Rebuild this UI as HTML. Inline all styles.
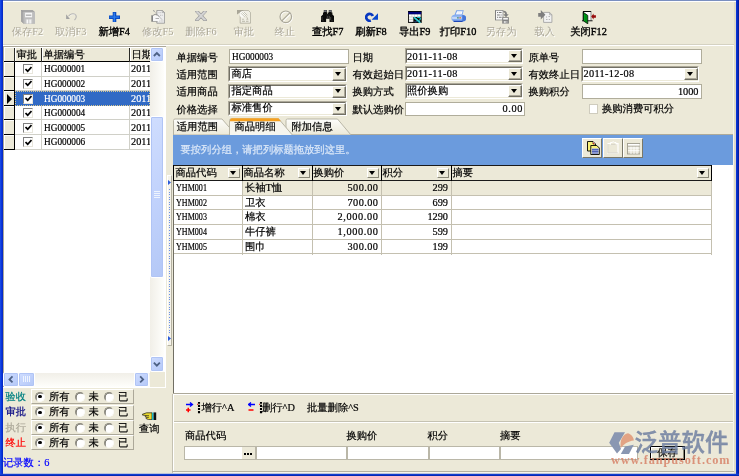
<!DOCTYPE html><html><head><meta charset="utf-8"><title>form</title><style>
*{box-sizing:border-box;margin:0;padding:0}
html,body{width:739px;height:476px;overflow:hidden;background:#ECE9D8}
body{position:relative;font-family:"Liberation Serif","WenQuanYi Zen Hei",serif;font-size:10.3px;line-height:12px;color:#000}
.a{position:absolute;white-space:nowrap}
.t{position:absolute;white-space:nowrap;height:12px;line-height:12px;-webkit-text-stroke:.2px currentColor}
.t.dis{color:#ACA899;text-shadow:1px 1px 0 #fff;-webkit-text-stroke:0}
.hy{padding:0 .85px}
.pd{padding:0 1.250px}
.sx{display:inline-block;transform-origin:0 50%}
.t.b{-webkit-text-stroke:.35px #000}
.flat{position:absolute;background:#fff;border:1px solid #B0AD9B}
.sunk{position:absolute;background:#fff;border-top:1px solid #ACA899;border-left:1px solid #ACA899;border-right:1px solid #fff;border-bottom:1px solid #fff}
.sunk:before{content:"";position:absolute;left:0;top:0;right:0;bottom:0;border-top:1px solid #716F64;border-left:1px solid #716F64;border-right:1px solid #ECE9D8;border-bottom:1px solid #ECE9D8}
.cbtn{position:absolute;background:#ECE9D8;border-top:1px solid #fff;border-left:1px solid #fff;border-right:1px solid #716F64;border-bottom:1px solid #716F64;box-shadow:inset -1px -1px 0 #ACA899}
.arr{position:absolute;width:0;height:0;border-left:4px solid transparent;border-right:4px solid transparent;border-top:4px solid #000}
.sarr{position:absolute;width:0;height:0;border-left:3.5px solid transparent;border-right:3.5px solid transparent;border-top:4px solid #000}
.hl{position:absolute;height:1px}
.vl{position:absolute;width:1px}
.rg{position:absolute;border-top:1px solid #fff;border-left:1px solid #fff;border-right:1px solid #ACA899;border-bottom:1px solid #ACA899;background:#ECE9D8}
.rad{position:absolute;width:10px;height:10px;border-radius:50%;background:#fff;border:1px solid;border-color:#8A887C #FBFBF8 #FBFBF8 #8A887C;box-shadow:inset .6px .6px 0 #5A584E}
.rad.on:after{content:"";position:absolute;left:2.300px;top:2.300px;width:3.400px;height:3.400px;border-radius:50%;background:#000}
.sb{position:absolute;background:linear-gradient(135deg,#CFDDFE 0%,#C1D2FC 50%,#B4C8F6 100%);border:1px solid #fff;border-radius:2px;box-shadow:inset 0 0 0 1px #B0C4F5}
</style></head><body><div id="w" style="position:absolute;left:0;top:0;width:739px;height:476px;will-change:transform">
<div class="a" style="left:0px;top:0px;width:739px;height:1px;background:#7A8FC0;"></div>
<div class="a" style="left:0px;top:1px;width:739px;height:1px;background:#FFFFFF;"></div>
<div class="a" style="left:0px;top:0px;width:3px;height:476px;background:linear-gradient(90deg,#1A50E8,#0831D9 60%,#0628B8);"></div>
<div class="a" style="left:736px;top:0px;width:3px;height:476px;background:linear-gradient(90deg,#0A3AE0,#0628C0 50%,#001A90);"></div>
<div class="a" style="left:734px;top:2px;width:2px;height:472px;background:#DEDAC9;"></div>
<div class="a" style="left:733px;top:46px;width:1px;height:427px;background:#F6F5EC;"></div>
<div class="a" style="left:0px;top:474px;width:739px;height:2px;background:linear-gradient(180deg,#1848DC,#0020A8);"></div>
<div class="a" style="left:0px;top:473px;width:739px;height:1px;background:rgba(40,80,220,.25);"></div>
<div class="a" style="left:3px;top:44px;width:731px;height:1px;background:#D5D2C2;"></div>
<div class="a" style="left:3px;top:45px;width:731px;height:1px;background:#FFFFFF;"></div>
<svg class="a" style="left:20.9px;top:10px;" width="14" height="13.5" viewBox="0 0 14 13.500" preserveAspectRatio="none"><path d="M0 0H11.600L14 2V13.500H2.600L0 11z" fill="#A6A6A6"/><path d="M2.200 2H14V13.500H2.600z" fill="#BDBDBD"/><path d="M0 0L2.200 2M0 11L2.600 13.500" stroke="#989898" stroke-width=".6"/><rect x="4.100" y="2.700" width="7" height="4.600" fill="#F6F6F6"/><rect x="4.900" y="4.600" width="5.400" height="1.100" fill="#A0A0A0"/><rect x="4.600" y="9" width="6.600" height="4.500" fill="#CFCFCF"/><rect x="5.600" y="9.600" width="1.500" height="3.900" fill="#F8F8F8"/><rect x="8.300" y="9.600" width="1.900" height="3.900" fill="#F0F0F0"/></svg>
<div class="t dis" style="left:-32.5px;width:120px;text-align:center;top:26px;">保存F2</div>
<svg class="a" style="left:66px;top:12.5px;" width="11.5" height="8" viewBox="0 0 11.500 8" preserveAspectRatio="none"><path d="M0.100 1.300V6.100H3.900z" fill="#A2A2A2"/><path d="M2.500 3.200C4 1 7 0.300 8.800 1.300 10.800 2.500 10.800 5 8.500 7" fill="none" stroke="#B4B4B4" stroke-width="1.100"/><path d="M3 3.900C4.500 1.700 7.500 1 9.300 2" fill="none" stroke="#fff" stroke-width=".6" opacity=".7"/></svg>
<div class="t dis" style="left:10.75px;width:120px;text-align:center;top:26px;">取消F3</div>
<svg class="a" style="left:109.4px;top:11.6px;" width="11" height="10.6" viewBox="0 0 11 10.600" preserveAspectRatio="none"><path d="M3.700 0h3.600v3.500h3.700v3.600H7.300v3.500H3.700V7.100H0V3.500h3.700z" fill="#0A4CC4"/><path d="M4.600 0.800h1.400v3.600h4v1.300H6v4H4.600v-4h-4V4.400h4z" fill="#2C7CEC"/></svg>
<div class="t b" style="left:54.25px;width:120px;text-align:center;top:26px;">新增F4</div>
<svg class="a" style="left:151px;top:10px;" width="14" height="13.6" viewBox="0 0 14 13.600" preserveAspectRatio="none"><path d="M5.800 0.400H11.300L13.600 2.600V13.200H5.800z" fill="#EDEDED" stroke="#8E8E8E" stroke-width=".8"/><path d="M11.300 0.400V2.600H13.600" fill="none" stroke="#8E8E8E" stroke-width=".6"/><path d="M7.500 2.700h3M9 5.300h3M8 11h4.500" stroke="#A8A8A8" stroke-width=".7" stroke-dasharray="1 .7"/><path d="M1 5.600H6.500L8.500 7.500V11.200H1z" fill="#F8F8F8"/><path d="M0.300 5.300H2V11.800H0.300z" fill="#848484"/><path d="M2 5.500Q4 3.600 6 4.500L8.300 6.800" fill="none" stroke="#8E8E8E" stroke-width=".9"/><path d="M2 11.500H6.500" stroke="#9A9A9A" stroke-width=".8"/><path d="M2.600 0.600L11 9.600" stroke="#B0B0B0" stroke-width="1" stroke-dasharray="2 .6"/><path d="M4.500 8.500H8" stroke="#9A9A9A" stroke-width=".8"/><path d="M2.200 0.300l1.200 0.300-0.600 0.800z" fill="#7A7A7A"/></svg>
<div class="t dis" style="left:97.75px;width:120px;text-align:center;top:26px;">修改F5</div>
<svg class="a" style="left:195px;top:11.3px;" width="12" height="9.6" viewBox="0 0 12 9.600" preserveAspectRatio="none"><path d="M0 0H3.100L12 9.600H8.900zM8.900 0H12L3.100 9.600H0z" fill="#D2D2D2" stroke="#A2A2A2" stroke-width="1.100" stroke-linejoin="round"/><path d="M0.500 0.400H2.900L11.500 9.200H9.100zM9.100 0.400H11.500L2.900 9.200H0.500z" fill="#D4D4D4"/></svg>
<div class="t dis" style="left:141px;width:120px;text-align:center;top:26px;">删除F6</div>
<svg class="a" style="left:237px;top:10px;" width="14" height="13.6" viewBox="0 0 14 13.600" preserveAspectRatio="none"><path d="M3.200 0.400H11.400L13.600 2.600V13.200H3.200z" fill="#F0EEE4" stroke="#ABA899" stroke-width=".8"/><path d="M0 0H7L0 4.600z" fill="#A9A698"/><circle cx="5.600" cy="4.300" r="3.100" fill="#FAFAF6"/><path d="M4 3.200L8 7.200M5.300 2.300L9.300 6.300M6.800 1.800L10.300 5.300" stroke="#B5B2A2" stroke-width=".7"/><path d="M9.500 6.500l1.500 3" stroke="#B5B2A2" stroke-width=".7"/><path d="M5.200 9.300h1.600M9.500 9.300h1.200M5 11.300h3M9 11.300h2.500" stroke="#ABA899" stroke-width=".8"/></svg>
<div class="t dis" style="left:183.75px;width:120px;text-align:center;top:26px;">审批</div>
<svg class="a" style="left:278.6px;top:9.6px;" width="14" height="14" viewBox="0 0 14 14" preserveAspectRatio="none"><circle cx="7.400" cy="7.500" r="5.800" fill="none" stroke="#fff" stroke-width="1.200"/><path d="M3.600 11.800L11.800 3.600" stroke="#fff" stroke-width="1.200"/><circle cx="6.800" cy="6.800" r="5.800" fill="none" stroke="#ABA899" stroke-width="1.200"/><path d="M2.800 10.800L10.800 2.800" stroke="#ABA899" stroke-width="1.200"/></svg>
<div class="t dis" style="left:224.75px;width:120px;text-align:center;top:26px;">终止</div>
<svg class="a" style="left:321px;top:10px;" width="13.4" height="12" viewBox="0 0 13.400 12" preserveAspectRatio="none"><path d="M2.800 0H5.800V2.500H6.400V6H5.100V12H0V6.500L2 4.500V2.500H2.800z" fill="#0A0A0A"/><path d="M10.600 0H7.800V2.500H7V6H8.500V12H13.400V6.500L11.400 4.500V2.500H10.600z" fill="#0A0A0A"/><rect x="5" y="4" width="3.600" height="4.800" fill="#151515"/><rect x="3.100" y="0.300" width="2.400" height="1.700" fill="#70747C"/><rect x="8.100" y="0.300" width="2.400" height="1.700" fill="#70747C"/><path d="M1 7v3M6.700 6v2.500M9.700 7v3" stroke="#505050" stroke-width=".8"/><path d="M1 10.800h2M10 10.800h2" stroke="#404040" stroke-width=".6"/></svg>
<div class="t b" style="left:267.75px;width:120px;text-align:center;top:26px;">查找F7</div>
<svg class="a" style="left:365px;top:11.5px;" width="13.5" height="11" viewBox="0 0 13.500 11" preserveAspectRatio="none"><path d="M7.800 4.100 A3.400 3.400 0 1 0 5.800 8.500" fill="none" stroke="#0838C0" stroke-width="2.700"/><path d="M13 1.300V7.700H6.600z" fill="#0A48D0"/></svg>
<div class="t b" style="left:311px;width:120px;text-align:center;top:26px;">刷新F8</div>
<svg class="a" style="left:408.2px;top:10.6px;" width="13.6" height="12.2" viewBox="0 0 13.600 12.200" preserveAspectRatio="none"><rect x="0.400" y="0.400" width="12.800" height="11" fill="#C8C8C8" stroke="#000" stroke-width=".9"/><rect x="0.400" y="0.300" width="12.800" height="3" fill="#00007C"/><rect x="0.400" y="0" width="12.800" height="0.800" fill="#000"/><path d="M1 4.600h2.600M4.200 4.600h2.200M7 4.600h2.200M9.800 4.600h2.600" stroke="#fff" stroke-width="1.700"/><rect x="1" y="6.400" width="3.800" height="4.300" fill="#F4F4F4"/><path d="M1 8.500h3.800" stroke="#B0B0B0" stroke-width=".6"/><path d="M5.400 6H13.200V12H4.200L4 11H5.400z" fill="#0C0C0C"/><path d="M6 6.300L12.300 11.800" stroke="#18C4CC" stroke-width="1.700"/><path d="M6.300 6.100L12.600 11.600" stroke="#90F0F0" stroke-width=".5"/><path d="M9.200 6.600Q12 5.800 12.400 7.400 12.600 8.800 11.200 9.400" fill="none" stroke="#18C4CC" stroke-width="1.100"/><path d="M6.500 10.600Q7.500 11.200 8.800 10.600" fill="none" stroke="#3858A8" stroke-width=".9"/></svg>
<div class="t b" style="left:354.75px;width:120px;text-align:center;top:26px;">导出F9</div>
<svg class="a" style="left:451px;top:10.3px;" width="15.5" height="12.2" viewBox="0 0 15.500 12.200" preserveAspectRatio="none"><path d="M5.300 0.300H12.800L11.400 5H3.500z" fill="#78A2EC"/><path d="M6.100 1.200H11.600L10.600 4.600H4.800z" fill="#FBFCFF"/><path d="M6.500 3h3.500" stroke="#D8E0F0" stroke-width=".7"/><path d="M0.500 7.200C0.500 5.600 2 4.700 3.500 4.700H11.500C13.500 4.700 15 6 15 7.500V9C15 10.500 13.500 11.500 12 11.500H3.500C2 11.500 0.500 10.500 0.500 9z" fill="#86AEF0"/><path d="M11.300 4.900C13.500 4.900 15 6 15 7.500V9C15 10.200 14 11 13 11.300L11.300 11.300z" fill="#4676D8"/><rect x="0.900" y="6.700" width="10" height="2.200" rx=".8" fill="#C2D6F8"/><path d="M2 10.700H12.200L11.200 12.100H3z" fill="#1C46B6"/><rect x="6.300" y="7" width="1.100" height="1.600" fill="#30985A"/><rect x="7.600" y="7" width="0.800" height="1.600" fill="#7060B0"/><rect x="8.700" y="7" width="1.200" height="1.600" fill="#F08030"/></svg>
<div class="t b" style="left:398px;width:120px;text-align:center;top:26px;">打印F10</div>
<svg class="a" style="left:495px;top:10px;" width="14" height="13.6" viewBox="0 0 14 13.600" preserveAspectRatio="none"><rect x="0.400" y="0.400" width="7.600" height="9.600" fill="#F8F8F8" stroke="#8C8C8C" stroke-width=".8"/><path d="M0.400 0.400V10" stroke="#7A7A7A" stroke-width="1"/><path d="M2 2.500h1.200M4 2.500h2.600M2 5h2.800M5.600 5h1M2 7.300h1.200M4 7.300h2.600" stroke="#7C7C7C" stroke-width="1"/><path d="M8.300 0.800Q12 0.600 12 4.300H13.700L11 7.300 8.300 4.300H10.200Q10.200 2.400 8.300 2.300z" fill="#808080"/><rect x="7.200" y="7.200" width="6.700" height="6.400" fill="#848484"/><rect x="8.200" y="8" width="4.700" height="1.600" fill="#F4F4F4"/><rect x="8.800" y="11" width="3.500" height="2.200" fill="#DADADA"/><rect x="10.700" y="11.300" width="1" height="1.600" fill="#848484"/></svg>
<div class="t dis" style="left:441px;width:120px;text-align:center;top:26px;">另存为</div>
<svg class="a" style="left:538.3px;top:10px;" width="14.3" height="12.8" viewBox="0 0 14.300 12.800" preserveAspectRatio="none"><path d="M5.600 2.400H11.600L13.900 4.800V12.400H5.600z" fill="#F1F1F1" stroke="#9C9C9C" stroke-width=".8"/><path d="M11.600 2.400V4.800H13.900" fill="none" stroke="#9C9C9C" stroke-width=".7"/><path d="M8 7h1M10.500 6.500h1.500M8 9.500h1.500M10.800 9.500h1.200" stroke="#AEAEAE" stroke-width=".9"/><path d="M0.200 3H2.800V0L7.400 4.800 2.800 9.600V6.800H0.200z" fill="#7E7E7E"/></svg>
<div class="t dis" style="left:484.5px;width:120px;text-align:center;top:26px;">载入</div>
<svg class="a" style="left:582px;top:10.6px;" width="14" height="13.2" viewBox="0 0 14 13.200" preserveAspectRatio="none"><rect x="1.200" y="0.500" width="7.800" height="9.300" fill="#fff"/><path d="M1 0.500H9.200M1.300 0.500V9.800" stroke="#000" stroke-width="1"/><path d="M9 0.800V9.800" stroke="#7A7A7A" stroke-width=".9"/><path d="M0 9.800H10.600" stroke="#000" stroke-width=".9"/><path d="M1.300 1.300L5.800 4.400V12.900L1.300 9.800z" fill="#008C14" stroke="#000" stroke-width=".7"/><path d="M2.500 3.500V10" stroke="#00A820" stroke-width=".8"/><path d="M9.200 5.500L11.600 2.500V4.300H13.900V6.800H11.600V8.600z" fill="#960A0A"/></svg>
<div class="t b" style="left:528.5px;width:120px;text-align:center;top:26px;">关闭F12</div>
<div class="a" style="left:3px;top:46px;width:163px;height:342px;background:#fff;"></div>
<div class="a" style="left:3px;top:46px;width:163px;height:1px;background:#ACA899;"></div>
<div class="a" style="left:3px;top:46px;width:1px;height:341px;background:#ACA899;"></div>
<div class="a" style="left:4px;top:47px;width:146px;height:15px;background:#ECE9D8;"></div>
<div class="a" style="left:4px;top:62px;width:10px;height:88px;background:#ECE9D8;"></div>
<div class="a" style="left:15px;top:75.6px;width:135px;height:1px;background:#D0D0C8;"></div>
<div class="a" style="left:23px;top:64.3px;width:10px;height:10px;background:#fff;border-top:1px solid #808080;border-left:1px solid #808080;border-right:1px solid #E8E6DC;border-bottom:1px solid #E8E6DC;"></div>
<svg class="a" style="left:25px;top:65.8px" width="7" height="7" viewBox="0 0 7 7"><path d="M0.500 3L2.700 5.200 6.500 1" fill="none" stroke="#000" stroke-width="1.7"/></svg>
<div class="t " style="left:43.5px;top:63.3px;"><span class="sx" style="transform:scaleX(0.900)">HG000001</span></div>
<div class="t " style="left:131px;top:63.3px;width:19px;overflow:hidden">2011</div>
<div class="a" style="left:4px;top:75.6px;width:10px;height:1px;background:#000;"></div>
<div class="a" style="left:4px;top:62px;width:10px;height:1px;background:#fff;"></div>
<div class="a" style="left:4px;top:62px;width:1px;height:13.599999999999994px;background:#fff;"></div>
<div class="a" style="left:15px;top:90.2px;width:135px;height:1px;background:#D0D0C8;"></div>
<div class="a" style="left:23px;top:78.9px;width:10px;height:10px;background:#fff;border-top:1px solid #808080;border-left:1px solid #808080;border-right:1px solid #E8E6DC;border-bottom:1px solid #E8E6DC;"></div>
<svg class="a" style="left:25px;top:80.4px" width="7" height="7" viewBox="0 0 7 7"><path d="M0.500 3L2.700 5.200 6.500 1" fill="none" stroke="#000" stroke-width="1.7"/></svg>
<div class="t " style="left:43.5px;top:77.9px;"><span class="sx" style="transform:scaleX(0.900)">HG000002</span></div>
<div class="t " style="left:131px;top:77.9px;width:19px;overflow:hidden">2011</div>
<div class="a" style="left:4px;top:90.2px;width:10px;height:1px;background:#000;"></div>
<div class="a" style="left:4px;top:76.6px;width:10px;height:1px;background:#fff;"></div>
<div class="a" style="left:4px;top:76.6px;width:1px;height:13.600000000000009px;background:#fff;"></div>
<div class="a" style="left:15px;top:91.2px;width:135px;height:14.599999999999994px;background:#316AC5;"></div>
<div class="a" style="left:23px;top:93.5px;width:10px;height:10px;background:#fff;border-top:1px solid #808080;border-left:1px solid #808080;border-right:1px solid #E8E6DC;border-bottom:1px solid #E8E6DC;"></div>
<svg class="a" style="left:25px;top:95.0px" width="7" height="7" viewBox="0 0 7 7"><path d="M0.500 3L2.700 5.200 6.500 1" fill="none" stroke="#000" stroke-width="1.7"/></svg>
<div class="t " style="left:43.5px;top:92.5px;color:#fff"><span class="sx" style="transform:scaleX(0.900)">HG000003</span></div>
<div class="t " style="left:131px;top:92.5px;color:#fff;width:19px;overflow:hidden">2011</div>
<div class="a" style="left:4px;top:104.8px;width:10px;height:1px;background:#000;"></div>
<div class="a" style="left:4px;top:91.2px;width:10px;height:1px;background:#fff;"></div>
<div class="a" style="left:4px;top:91.2px;width:1px;height:13.599999999999994px;background:#fff;"></div>
<div class="a" style="left:15px;top:119.4px;width:135px;height:1px;background:#D0D0C8;"></div>
<div class="a" style="left:23px;top:108.1px;width:10px;height:10px;background:#fff;border-top:1px solid #808080;border-left:1px solid #808080;border-right:1px solid #E8E6DC;border-bottom:1px solid #E8E6DC;"></div>
<svg class="a" style="left:25px;top:109.6px" width="7" height="7" viewBox="0 0 7 7"><path d="M0.500 3L2.700 5.200 6.500 1" fill="none" stroke="#000" stroke-width="1.7"/></svg>
<div class="t " style="left:43.5px;top:107.1px;"><span class="sx" style="transform:scaleX(0.900)">HG000004</span></div>
<div class="t " style="left:131px;top:107.1px;width:19px;overflow:hidden">2011</div>
<div class="a" style="left:4px;top:119.4px;width:10px;height:1px;background:#000;"></div>
<div class="a" style="left:4px;top:105.8px;width:10px;height:1px;background:#fff;"></div>
<div class="a" style="left:4px;top:105.8px;width:1px;height:13.600000000000009px;background:#fff;"></div>
<div class="a" style="left:15px;top:134px;width:135px;height:1px;background:#D0D0C8;"></div>
<div class="a" style="left:23px;top:122.7px;width:10px;height:10px;background:#fff;border-top:1px solid #808080;border-left:1px solid #808080;border-right:1px solid #E8E6DC;border-bottom:1px solid #E8E6DC;"></div>
<svg class="a" style="left:25px;top:124.2px" width="7" height="7" viewBox="0 0 7 7"><path d="M0.500 3L2.700 5.200 6.500 1" fill="none" stroke="#000" stroke-width="1.7"/></svg>
<div class="t " style="left:43.5px;top:121.7px;"><span class="sx" style="transform:scaleX(0.900)">HG000005</span></div>
<div class="t " style="left:131px;top:121.7px;width:19px;overflow:hidden">2011</div>
<div class="a" style="left:4px;top:134px;width:10px;height:1px;background:#000;"></div>
<div class="a" style="left:4px;top:120.4px;width:10px;height:1px;background:#fff;"></div>
<div class="a" style="left:4px;top:120.4px;width:1px;height:13.599999999999994px;background:#fff;"></div>
<div class="a" style="left:15px;top:148.6px;width:135px;height:1px;background:#D0D0C8;"></div>
<div class="a" style="left:23px;top:137.3px;width:10px;height:10px;background:#fff;border-top:1px solid #808080;border-left:1px solid #808080;border-right:1px solid #E8E6DC;border-bottom:1px solid #E8E6DC;"></div>
<svg class="a" style="left:25px;top:138.8px" width="7" height="7" viewBox="0 0 7 7"><path d="M0.500 3L2.700 5.200 6.500 1" fill="none" stroke="#000" stroke-width="1.7"/></svg>
<div class="t " style="left:43.5px;top:136.3px;"><span class="sx" style="transform:scaleX(0.900)">HG000006</span></div>
<div class="t " style="left:131px;top:136.3px;width:19px;overflow:hidden">2011</div>
<div class="a" style="left:4px;top:148.6px;width:10px;height:1px;background:#000;"></div>
<div class="a" style="left:4px;top:135px;width:10px;height:1px;background:#fff;"></div>
<div class="a" style="left:4px;top:135px;width:1px;height:13.599999999999994px;background:#fff;"></div>
<div class="a" style="left:41px;top:62px;width:1px;height:29px;background:#D0D0C8;"></div>
<div class="a" style="left:41px;top:106px;width:1px;height:44px;background:#D0D0C8;"></div>
<div class="a" style="left:129px;top:62px;width:1px;height:29px;background:#D0D0C8;"></div>
<div class="a" style="left:129px;top:106px;width:1px;height:44px;background:#D0D0C8;"></div>
<div class="a" style="left:15px;top:91.2px;width:135px;height:14.599999999999994px;background:transparent;border:1px dotted #D8C890"></div>
<div class="a" style="left:4px;top:61px;width:146px;height:1px;background:#000;"></div>
<div class="a" style="left:14px;top:47px;width:1px;height:15px;background:#2A2A26;"></div>
<div class="a" style="left:41px;top:47px;width:1px;height:15px;background:#2A2A26;"></div>
<div class="a" style="left:129px;top:47px;width:1px;height:15px;background:#2A2A26;"></div>
<div class="a" style="left:14px;top:62px;width:1px;height:88px;background:#000;"></div>
<div class="a" style="left:4px;top:47px;width:1px;height:14px;background:#fff;"></div>
<div class="a" style="left:15px;top:47px;width:1px;height:14px;background:#fff;"></div>
<div class="a" style="left:42px;top:47px;width:1px;height:14px;background:#fff;"></div>
<div class="a" style="left:130px;top:47px;width:1px;height:14px;background:#fff;"></div>
<div class="a" style="left:4px;top:47px;width:146px;height:1px;background:#fff;"></div>
<div class="t " style="left:16.5px;top:48.5px;">审批</div>
<div class="t " style="left:43.5px;top:48.5px;">单据编号</div>
<div class="t " style="left:131.5px;top:48.5px;width:18px;overflow:hidden">日期</div>
<svg class="a" style="left:7px;top:93.500px" width="6" height="10" viewBox="0 0 6 10"><path d="M0 0L5 5 0 10z" fill="#000"/></svg>
<div class="a" style="left:150px;top:47px;width:14px;height:325px;background:linear-gradient(90deg,#F1EFE8,#FEFEFB);"></div>
<div class="sb" style="left:149.6px;top:46.9px;width:14.5px;height:15.2px"></div>
<svg class="a" style="left:0;top:0" width="739" height="476"><path d="M153.85 56.0L156.85 53.0L159.85 56.0" fill="none" stroke="#4D6185" stroke-width="1.8"/></svg>
<div class="sb" style="left:149.6px;top:356.3px;width:14.5px;height:15.7px"></div>
<svg class="a" style="left:0;top:0" width="739" height="476"><path d="M153.85 362.65000000000003L156.85 365.65000000000003L159.85 362.65000000000003" fill="none" stroke="#4D6185" stroke-width="1.8"/></svg>
<div class="sb" style="left:149.6px;top:116px;width:14.5px;height:161.7px"></div>
<div class="a" style="left:154px;top:191px;width:6px;height:1px;background:#EEF4FE;"></div>
<div class="a" style="left:154px;top:193px;width:6px;height:1px;background:#EEF4FE;"></div>
<div class="a" style="left:154px;top:195px;width:6px;height:1px;background:#EEF4FE;"></div>
<div class="a" style="left:154px;top:197px;width:6px;height:1px;background:#EEF4FE;"></div>
<div class="a" style="left:4px;top:372.5px;width:146px;height:14px;background:linear-gradient(180deg,#F1EFE8,#FEFEFB);"></div>
<div class="a" style="left:150px;top:372px;width:15px;height:14.5px;background:#ECE9D8;"></div>
<div class="sb" style="left:3.3px;top:371.8px;width:15.4px;height:15.2px"></div>
<svg class="a" style="left:0;top:0" width="739" height="476"><path d="M12.5 376.40000000000003L9.5 379.40000000000003L12.5 382.40000000000003" fill="none" stroke="#4D6185" stroke-width="1.8"/></svg>
<div class="sb" style="left:133.8px;top:371.8px;width:15.7px;height:15.2px"></div>
<svg class="a" style="left:0;top:0" width="739" height="476"><path d="M140.15 376.40000000000003L143.15 379.40000000000003L140.15 382.40000000000003" fill="none" stroke="#4D6185" stroke-width="1.8"/></svg>
<div class="sb" style="left:18.4px;top:371.8px;width:16.3px;height:15.2px"></div>
<div class="a" style="left:23px;top:376px;width:1px;height:6px;background:#EEF4FE;"></div>
<div class="a" style="left:25px;top:376px;width:1px;height:6px;background:#EEF4FE;"></div>
<div class="a" style="left:27px;top:376px;width:1px;height:6px;background:#EEF4FE;"></div>
<div class="a" style="left:29px;top:376px;width:1px;height:6px;background:#EEF4FE;"></div>
<div class="t " style="left:5.5px;top:390.65px;color:#008080">验收</div>
<div class="rg" style="left:31px;top:389px;width:103px;height:15px"></div>
<div class="rad on" style="left:35.2px;top:391.8px"></div>
<div class="t " style="left:49.0px;top:390.65px;">所有</div>
<div class="rad" style="left:74.7px;top:391.8px"></div>
<div class="t " style="left:88.5px;top:390.65px;">未</div>
<div class="rad" style="left:104.3px;top:391.8px"></div>
<div class="t " style="left:118.1px;top:390.65px;">已</div>
<div class="t " style="left:5.5px;top:406.15px;color:#000080">审批</div>
<div class="rg" style="left:31px;top:404.5px;width:103px;height:15px"></div>
<div class="rad on" style="left:35.2px;top:407.3px"></div>
<div class="t " style="left:49.0px;top:406.15px;">所有</div>
<div class="rad" style="left:74.7px;top:407.3px"></div>
<div class="t " style="left:88.5px;top:406.15px;">未</div>
<div class="rad" style="left:104.3px;top:407.3px"></div>
<div class="t " style="left:118.1px;top:406.15px;">已</div>
<div class="t " style="left:5.5px;top:421.65px;color:#ACA899">执行</div>
<div class="rg" style="left:31px;top:420px;width:103px;height:15px"></div>
<div class="rad on" style="left:35.2px;top:422.8px"></div>
<div class="t " style="left:49.0px;top:421.65px;">所有</div>
<div class="rad" style="left:74.7px;top:422.8px"></div>
<div class="t " style="left:88.5px;top:421.65px;">未</div>
<div class="rad" style="left:104.3px;top:422.8px"></div>
<div class="t " style="left:118.1px;top:421.65px;">已</div>
<div class="t " style="left:5.5px;top:436.65px;color:#FF0000">终止</div>
<div class="rg" style="left:31px;top:435px;width:103px;height:15px"></div>
<div class="rad on" style="left:35.2px;top:437.8px"></div>
<div class="t " style="left:49.0px;top:436.65px;">所有</div>
<div class="rad" style="left:74.7px;top:437.8px"></div>
<div class="t " style="left:88.5px;top:436.65px;">未</div>
<div class="rad" style="left:104.3px;top:437.8px"></div>
<div class="t " style="left:118.1px;top:436.65px;">已</div>
<div class="t " style="left:3px;top:457px;color:#0000FF">记录数：6</div>
<svg class="a" style="left:142px;top:411.500px" width="14.500" height="8.500" viewBox="0 0 14.500 8.500"><path d="M0.300 2.300L4.500 0.800H10V7.600H6.500L4 6.500 5 5.300 3 4.800 4.200 3.600 0.300 3z" fill="#E8D830" stroke="#1A1A10" stroke-width=".7"/><path d="M4.200 3.600H7M5 5.300H7" stroke="#1A1A10" stroke-width=".6"/><rect x="10" y="0.600" width="1.600" height="7.400" fill="#18B8C8"/><rect x="11.600" y="0.400" width="2.600" height="7.800" fill="#101010"/></svg>
<div class="t " style="left:139px;top:422.8px;">查询</div>
<div class="a" style="left:166.7px;top:174.5px;width:5px;height:171px;background:#F5F3EA;border-left:1px solid #fff;border-top:1px solid #fff;border-right:1px solid #B5B2A2;border-bottom:1px solid #B5B2A2"></div>
<div class="a" style="left:169px;top:188.500px;width:1px;height:144px;background:repeating-linear-gradient(180deg,#6A90E8 0,#6A90E8 1px,transparent 1px,transparent 2.560px)"></div>
<svg class="a" style="left:167.500px;top:179.500px" width="3" height="5" viewBox="0 0 3 5"><path d="M0 0L3 2.500 0 5z" fill="#2A5AD8"/></svg>
<svg class="a" style="left:167.500px;top:336px" width="3" height="5" viewBox="0 0 3 5"><path d="M0 0L3 2.500 0 5z" fill="#2A5AD8"/></svg>
<div class="t " style="left:176.5px;top:52px;">单据编号</div>
<div class="t " style="left:176.5px;top:68.6px;">适用范围</div>
<div class="t " style="left:176.5px;top:86.1px;">适用商品</div>
<div class="t " style="left:176.5px;top:103.7px;">价格选择</div>
<div class="t " style="left:352.5px;top:52px;">日期</div>
<div class="t " style="left:352.5px;top:68.6px;">有效起始日</div>
<div class="t " style="left:352.5px;top:86.1px;">换购方式</div>
<div class="t " style="left:352.5px;top:103.7px;">默认选购价</div>
<div class="t " style="left:528.5px;top:52px;">原单号</div>
<div class="t " style="left:528.5px;top:68.6px;">有效终止日</div>
<div class="t " style="left:528.5px;top:86.1px;">换购积分</div>
<div class="flat" style="left:229px;top:49px;width:119.5px;height:15.299999999999997px"></div>
<div class="t " style="left:231.5px;top:51.2px;"><span class="sx" style="transform:scaleX(0.900)">HG000003</span></div>
<div class="sunk" style="left:228px;top:66px;width:119px;height:16px"></div>
<div class="cbtn" style="left:332.2px;top:68px;width:14px;height:12.5px"></div>
<div class="sarr" style="left:335.4px;top:72.2px"></div>
<div class="t " style="left:231.5px;top:67.6px;">商店</div>
<div class="sunk" style="left:228px;top:83.5px;width:119px;height:15.5px"></div>
<div class="cbtn" style="left:332.2px;top:85.5px;width:14px;height:12.0px"></div>
<div class="sarr" style="left:335.4px;top:89.45px"></div>
<div class="t " style="left:231.5px;top:84.9px;">指定商品</div>
<div class="sunk" style="left:228px;top:100.7px;width:119px;height:15.799999999999997px"></div>
<div class="cbtn" style="left:332.2px;top:102.7px;width:14px;height:12.299999999999997px"></div>
<div class="sarr" style="left:335.4px;top:106.8px"></div>
<div class="t " style="left:231.5px;top:102.3px;">标准售价</div>
<div class="sunk" style="left:404.5px;top:48.4px;width:118.5px;height:15.399999999999999px"></div>
<div class="cbtn" style="left:508.2px;top:50.4px;width:14px;height:11.899999999999999px"></div>
<div class="sarr" style="left:511.4px;top:54.3px"></div>
<div class="t " style="left:407px;top:51.2px;"><span style="letter-spacing:0.34px;margin-right:-0.34px">2011-11-08</span></div>
<div class="sunk" style="left:404.5px;top:65.6px;width:118.5px;height:15.700000000000003px"></div>
<div class="cbtn" style="left:508.2px;top:67.6px;width:14px;height:12.200000000000003px"></div>
<div class="sarr" style="left:511.4px;top:71.64999999999999px"></div>
<div class="t " style="left:407px;top:68px;"><span style="letter-spacing:0.34px;margin-right:-0.34px">2011-11-08</span></div>
<div class="sunk" style="left:404.5px;top:83.1px;width:118.5px;height:15.900000000000006px"></div>
<div class="cbtn" style="left:508.2px;top:85.1px;width:14px;height:12.400000000000006px"></div>
<div class="sarr" style="left:511.4px;top:89.25px"></div>
<div class="t " style="left:407px;top:84.7px;">照价换购</div>
<div class="flat" style="left:405px;top:101.7px;width:120px;height:14.799999999999997px"></div>
<div class="t " style="right:216.5px;top:103px;"><span style="letter-spacing:0.64px;margin-right:-0.64px">0.00</span></div>
<div class="flat" style="left:582.2px;top:49.3px;width:119.79999999999995px;height:15.0px"></div>
<div class="sunk" style="left:580.8px;top:66.2px;width:118.0px;height:15.5px"></div>
<div class="cbtn" style="left:684.0px;top:68.2px;width:14px;height:12.0px"></div>
<div class="sarr" style="left:687.2px;top:72.15px"></div>
<div class="t " style="left:583.5px;top:68px;"><span style="letter-spacing:0.34px;margin-right:-0.34px">2011-12-08</span></div>
<div class="flat" style="left:582.2px;top:84.3px;width:119.79999999999995px;height:14.700000000000003px"></div>
<div class="t " style="right:40.5px;top:85.5px;">1000</div>
<div class="a" style="left:588.8px;top:104.4px;width:9.6px;height:9.8px;background:#fff;border:1px solid #CFCCBE"></div>
<div class="t " style="left:602px;top:103px;">换购消费可积分</div>
<div class="a" style="left:173px;top:134px;width:560px;height:1px;background:#ADAA9A;"></div>
<svg class="a" style="left:0;top:0" width="739" height="476"><defs><linearGradient id="tg" x1="0" y1="0" x2="0" y2="1"><stop offset="0" stop-color="#FDFDFB"/><stop offset="1" stop-color="#ECE9D8"/></linearGradient></defs><path d="M173.500 135V120.500q0-1.500 1.500-1.500H222l14 16z" fill="url(#tg)" stroke="#B8B5A5" stroke-width="1"/><path d="M286 135V120.500q0-1.500 1.500-1.500H337.500l13.500 16z" fill="url(#tg)" stroke="#B8B5A5" stroke-width="1"/><path d="M229.500 135.500V120.500q0-1.500 1.500-1.500H278.800l14 16.500z" fill="#F6F5EE" stroke="#B8B5A5" stroke-width="1"/><path d="M230 121.300v-1q0-2 2-2H278.500l2.300 3z" fill="#F5A020"/></svg>
<div class="t " style="left:176.8px;top:120.5px;">适用范围</div>
<div class="t " style="left:234.5px;top:120.5px;">商品明细</div>
<div class="t " style="left:291.5px;top:120.5px;">附加信息</div>
<div class="a" style="left:173px;top:135px;width:560px;height:30px;background:#6B9BDD;"></div>
<div class="t " style="left:180.5px;top:144px;color:#DCE8F8">要按列分组，请把列标题拖放到这里。</div>
<div class="a" style="left:582px;top:138px;width:20.300px;height:19.500px;background:#ECE9D8;border-top:1.500px solid #fff;border-left:1.500px solid #fff;border-right:1.500px solid #7A7868;border-bottom:1.500px solid #7A7868"></div>
<div class="a" style="left:602.5px;top:138px;width:20.300px;height:19.500px;background:#ECE9D8;border-top:1.500px solid #fff;border-left:1.500px solid #fff;border-right:1.500px solid #7A7868;border-bottom:1.500px solid #7A7868"></div>
<div class="a" style="left:622.5px;top:138px;width:20.300px;height:19.500px;background:#ECE9D8;border-top:1.500px solid #fff;border-left:1.500px solid #fff;border-right:1.500px solid #7A7868;border-bottom:1.500px solid #7A7868"></div>
<svg class="a" style="left:587px;top:141px" width="13" height="14" viewBox="0 0 13 14"><path d="M0.500 0.500h5.500l2.500 2.500v7h-8z" fill="#F8F078" stroke="#000" stroke-width=".9"/><path d="M6 0.500v2.500h2.500" fill="#fff" stroke="#000" stroke-width=".6"/><path d="M3.800 4.500h6l2.500 2.500v6.500h-8.500z" fill="#F8F078" stroke="#000" stroke-width=".9"/><rect x="4.600" y="7.300" width="7" height="5.600" fill="#fff"/><path d="M4.800 8.200h6.800M4.800 10.100h6.800M4.800 12h6.800" stroke="#1830A0" stroke-width="1.100"/><rect x="6" y="1.800" width="1.200" height="1.200" fill="#E02020"/></svg>
<svg class="a" style="left:607px;top:141px" width="13" height="13" viewBox="0 0 13 13"><path d="M1 2.500h2.500M9 2.500h2v9.500h-10.500v-9.500" fill="none" stroke="#fff" stroke-width="1.200"/><path d="M0.800 3v8.800h10" fill="none" stroke="#D0CDBE" stroke-width=".8"/><path d="M3.500 3.500v-2h1.500q1.200-1.500 2.400 0h1.600v2z" fill="#ECE9D8" stroke="#fff" stroke-width="1"/><path d="M3.800 3.500h5" stroke="#D0CDBE" stroke-width=".8"/></svg>
<svg class="a" style="left:626.500px;top:143px" width="13.500" height="11.500" viewBox="0 0 13.500 11.500"><rect x="0.500" y="0.500" width="12.500" height="10.500" fill="#E4E1D2" stroke="#A09D90" stroke-width=".9"/><rect x="1" y="1" width="11.500" height="1.600" fill="#fff"/><path d="M1 5h11.500M1 7.700h11.500M4 3v8M7 3v8M10 3v8" stroke="#fff" stroke-width=".9"/><path d="M1 3.200h11.500" stroke="#A09D90" stroke-width=".7"/></svg>
<div class="a" style="left:173px;top:165px;width:560px;height:228.5px;background:#fff;"></div>
<div class="a" style="left:173px;top:165px;width:1px;height:228px;background:#716F64;"></div>
<div class="a" style="left:173px;top:164.5px;width:1px;height:16.5px;background:#000;"></div>
<div class="a" style="left:173px;top:392.5px;width:560px;height:1px;background:#ACA899;"></div>
<div class="a" style="left:174px;top:165px;width:537px;height:15.5px;background:#ECE9D8;"></div>
<div class="a" style="left:174px;top:164.5px;width:537px;height:1px;background:#1A1A1A;"></div>
<div class="a" style="left:174px;top:180px;width:537px;height:1px;background:#1A1A1A;"></div>
<div class="a" style="left:242px;top:165px;width:1px;height:16px;background:#000;"></div>
<div class="a" style="left:312px;top:165px;width:1px;height:16px;background:#000;"></div>
<div class="a" style="left:381px;top:165px;width:1px;height:16px;background:#000;"></div>
<div class="a" style="left:451px;top:165px;width:1px;height:16px;background:#000;"></div>
<div class="a" style="left:711px;top:165px;width:1px;height:16px;background:#000;"></div>
<div class="a" style="left:243px;top:181px;width:468px;height:13.7px;background:#ECE9D8;"></div>
<div class="a" style="left:174px;top:194.5px;width:537px;height:1px;background:#C4C0B0;"></div>
<div class="t " style="left:175.5px;top:182.0px;"><span class="sx" style="transform:scaleX(0.783)">YHM001</span></div>
<div class="t " style="left:245px;top:182.0px;">长袖T恤</div>
<div class="t " style="right:361px;top:182.0px;"><span style="letter-spacing:0.43px;margin-right:-0.43px">500.00</span></div>
<div class="t " style="right:291px;top:182.0px;">299</div>
<div class="a" style="left:174px;top:209.20000000000002px;width:537px;height:1px;background:#C4C0B0;"></div>
<div class="t " style="left:175.5px;top:196.55px;"><span class="sx" style="transform:scaleX(0.783)">YHM002</span></div>
<div class="t " style="left:245px;top:196.55px;">卫衣</div>
<div class="t " style="right:361px;top:196.55px;"><span style="letter-spacing:0.43px;margin-right:-0.43px">700.00</span></div>
<div class="t " style="right:291px;top:196.55px;">699</div>
<div class="a" style="left:174px;top:223.9px;width:537px;height:1px;background:#C4C0B0;"></div>
<div class="t " style="left:175.5px;top:211.25px;"><span class="sx" style="transform:scaleX(0.783)">YHM003</span></div>
<div class="t " style="left:245px;top:211.25px;">棉衣</div>
<div class="t " style="right:361px;top:211.25px;"><span style="letter-spacing:0.64px;margin-right:-0.64px">2,000.00</span></div>
<div class="t " style="right:291px;top:211.25px;">1290</div>
<div class="a" style="left:174px;top:238.60000000000002px;width:537px;height:1px;background:#C4C0B0;"></div>
<div class="t " style="left:175.5px;top:225.95px;"><span class="sx" style="transform:scaleX(0.783)">YHM004</span></div>
<div class="t " style="left:245px;top:225.95px;">牛仔裤</div>
<div class="t " style="right:361px;top:225.95px;"><span style="letter-spacing:0.64px;margin-right:-0.64px">1,000.00</span></div>
<div class="t " style="right:291px;top:225.95px;">599</div>
<div class="a" style="left:174px;top:253.3px;width:537px;height:1px;background:#C4C0B0;"></div>
<div class="t " style="left:175.5px;top:240.65px;"><span class="sx" style="transform:scaleX(0.783)">YHM005</span></div>
<div class="t " style="left:245px;top:240.65px;">围巾</div>
<div class="t " style="right:361px;top:240.65px;"><span style="letter-spacing:0.43px;margin-right:-0.43px">300.00</span></div>
<div class="t " style="right:291px;top:240.65px;">199</div>
<div class="a" style="left:242px;top:181px;width:1px;height:73.5px;background:#C4C0B0;"></div>
<div class="a" style="left:312px;top:181px;width:1px;height:73.5px;background:#C4C0B0;"></div>
<div class="a" style="left:381px;top:181px;width:1px;height:73.5px;background:#C4C0B0;"></div>
<div class="a" style="left:451px;top:181px;width:1px;height:73.5px;background:#C4C0B0;"></div>
<div class="a" style="left:711px;top:181px;width:1px;height:73.5px;background:#C4C0B0;"></div>
<div class="t " style="left:175.5px;top:167.0px;">商品代码</div>
<div class="t " style="left:243.5px;top:167.0px;">商品名称</div>
<div class="t " style="left:313.5px;top:167.0px;">换购价</div>
<div class="t " style="left:382.5px;top:167.0px;">积分</div>
<div class="t " style="left:452.5px;top:167.0px;">摘要</div>
<div class="a" style="left:227.7px;top:167.500px;width:12px;height:10px;background:#ECE9D8;border-top:1px solid #fff;border-left:1px solid #fff;border-right:1px solid #8A8878;border-bottom:1px solid #8A8878"></div>
<div class="sarr" style="left:230.29999999999998px;top:171px"></div>
<div class="a" style="left:297.7px;top:167.500px;width:12px;height:10px;background:#ECE9D8;border-top:1px solid #fff;border-left:1px solid #fff;border-right:1px solid #8A8878;border-bottom:1px solid #8A8878"></div>
<div class="sarr" style="left:300.3px;top:171px"></div>
<div class="a" style="left:366.7px;top:167.500px;width:12px;height:10px;background:#ECE9D8;border-top:1px solid #fff;border-left:1px solid #fff;border-right:1px solid #8A8878;border-bottom:1px solid #8A8878"></div>
<div class="sarr" style="left:369.3px;top:171px"></div>
<div class="a" style="left:436.7px;top:167.500px;width:12px;height:10px;background:#ECE9D8;border-top:1px solid #fff;border-left:1px solid #fff;border-right:1px solid #8A8878;border-bottom:1px solid #8A8878"></div>
<div class="sarr" style="left:439.3px;top:171px"></div>
<div class="a" style="left:696.7px;top:167.500px;width:12px;height:10px;background:#ECE9D8;border-top:1px solid #fff;border-left:1px solid #fff;border-right:1px solid #8A8878;border-bottom:1px solid #8A8878"></div>
<div class="sarr" style="left:699.3000000000001px;top:171px"></div>
<div class="a" style="left:173px;top:394px;width:560px;height:1px;background:#fff;"></div>
<div class="a" style="left:173px;top:394px;width:1px;height:79px;background:#fff;"></div>
<div class="a" style="left:172px;top:394px;width:1px;height:79px;background:#C5C2B2;"></div>
<div class="a" style="left:174px;top:421px;width:559px;height:1px;background:#C5C2B2;"></div>
<div class="a" style="left:174px;top:422px;width:559px;height:1px;background:#fff;"></div>
<div class="a" style="left:172px;top:471px;width:562px;height:1px;background:#B5B2A2;"></div>
<div class="a" style="left:173px;top:472px;width:561px;height:1px;background:#F6F4EA;"></div>
<svg class="a" style="left:186px;top:402px" width="15" height="12" viewBox="0 0 15 12"><path d="M0 2.500h6M4 0.500l2.500 2L4 4.500" fill="none" stroke="#0000FF" stroke-width="1.300"/><path d="M0 8h4.500M2.250 5.800v4.500" stroke="#FF0000" stroke-width="1.500"/><path d="M13 -0.500v13" stroke="#000" stroke-width="2.100" stroke-dasharray="2.200 1"/><rect x="11" y="1.800" width="1" height="1" fill="#FF0000"/></svg>
<div class="t " style="left:201.5px;top:402px;">增行^A</div>
<svg class="a" style="left:248px;top:402px" width="15" height="12" viewBox="0 0 15 12"><path d="M7 2.500H1M3 0.500L0.500 2.500 3 4.500" fill="none" stroke="#0000FF" stroke-width="1.300"/><path d="M0.500 8h5" stroke="#FF0000" stroke-width="1.500"/><path d="M13 -0.500v13" stroke="#000" stroke-width="2.100" stroke-dasharray="2.200 1"/><rect x="11" y="1.800" width="1" height="1" fill="#FF0000"/></svg>
<div class="t " style="left:262px;top:402px;">删行^D</div>
<div class="t " style="left:307px;top:402px;">批量删除^S</div>
<div class="t " style="left:185px;top:429.7px;">商品代码</div>
<div class="t " style="left:346.5px;top:429.7px;">换购价</div>
<div class="t " style="left:427.5px;top:429.7px;">积分</div>
<div class="t " style="left:500px;top:429.7px;">摘要</div>
<div class="a" style="left:183.5px;top:446px;width:72.0px;height:13.500px;background:#fff;border:1px solid #BAB7A8"></div>
<div class="a" style="left:255.5px;top:446px;width:91.0px;height:13.500px;background:#fff;border:1px solid #BAB7A8"></div>
<div class="a" style="left:346.5px;top:446px;width:82.0px;height:13.500px;background:#fff;border:1px solid #BAB7A8"></div>
<div class="a" style="left:428.5px;top:446px;width:71.5px;height:13.500px;background:#fff;border:1px solid #BAB7A8"></div>
<div class="a" style="left:500px;top:446px;width:137.5px;height:13.500px;background:#fff;border:1px solid #BAB7A8"></div>
<div class="a" style="left:241.5px;top:447px;width:13px;height:11.5px;background:#ECE9D8;"></div>
<div class="a" style="left:244px;top:453px;width:1.5px;height:1.5px;background:#000;"></div>
<div class="a" style="left:247px;top:453px;width:1.5px;height:1.5px;background:#000;"></div>
<div class="a" style="left:250px;top:453px;width:1.5px;height:1.5px;background:#000;"></div>
<div class="a" style="left:649.500px;top:445.500px;width:35.500px;height:14px;background:#ECE9D8;border:1px solid #000;box-shadow:inset 1px 1px 0 #fff,inset -1px -1px 0 #8A8878"></div>
<div class="t " style="left:607.5px;width:120px;text-align:center;top:446.5px;">保存</div>
<svg class="a" style="left:608px;top:430px" width="28" height="26" viewBox="0 0 28 26"><path d="M6.500 2.200H17L10.800 12.800 13 19 9 23.500 1.200 12.800z" fill="#8A97B2"/><path d="M12.800 18.200C11.500 10 15 4 20 3.200 23.500 4.500 25.800 7.500 25.800 10.400 20 11 15.500 14 12.800 18.200z" fill="#E2A384"/><path d="M12.800 24L17 16.500 25.800 14.800 21 24z" fill="#8A97B2"/></svg>
<div class="a" style="left:634.500px;top:428.500px;font-size:23.500px;line-height:28px;color:rgba(108,126,160,.82);font-family:'Liberation Sans','Noto Sans CJK SC',sans-serif;font-weight:500;-webkit-text-stroke:.35px rgba(108,126,160,.82)">泛普软件</div>
<div class="a" style="left:611px;top:453px;font-size:12.300px;line-height:14px;color:rgba(215,130,105,.85);font-family:'Liberation Serif',serif;font-weight:bold;letter-spacing:.92px">www.fanpusoft.com</div>
</div></body></html>
